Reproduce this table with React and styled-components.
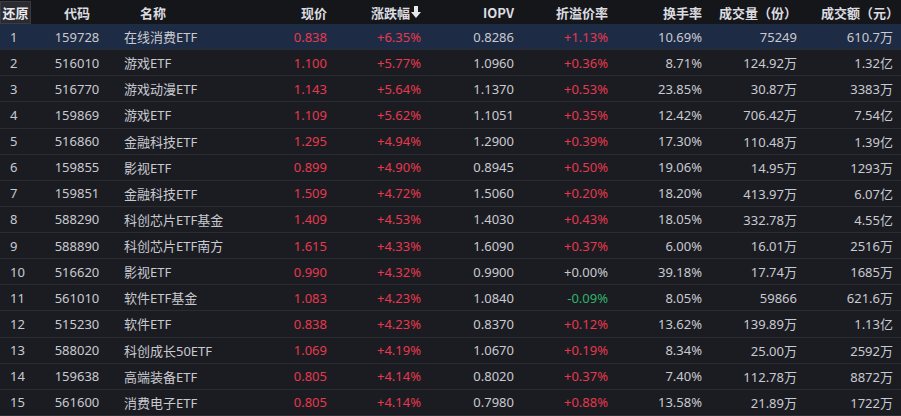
import React from "react";
import styled, { createGlobalStyle } from "styled-components";

const GlobalStyle = createGlobalStyle`
  html, body {
    margin: 0;
    padding: 0;
    background: #1b1c21;
  }
  body {
    font-family: "Noto Sans", "Noto Sans CJK SC", sans-serif;
  }
`;

const rows = [
  [1, "159728", "在线消费ETF", "0.838", "+6.35%", "0.8286", "+1.13%", "10.69%", "75249", "610.7万"],
  [2, "516010", "游戏ETF", "1.100", "+5.77%", "1.0960", "+0.36%", "8.71%", "124.92万", "1.32亿"],
  [3, "516770", "游戏动漫ETF", "1.143", "+5.64%", "1.1370", "+0.53%", "23.85%", "30.87万", "3383万"],
  [4, "159869", "游戏ETF", "1.109", "+5.62%", "1.1051", "+0.35%", "12.42%", "706.42万", "7.54亿"],
  [5, "516860", "金融科技ETF", "1.295", "+4.94%", "1.2900", "+0.39%", "17.30%", "110.48万", "1.39亿"],
  [6, "159855", "影视ETF", "0.899", "+4.90%", "0.8945", "+0.50%", "19.06%", "14.95万", "1293万"],
  [7, "159851", "金融科技ETF", "1.509", "+4.72%", "1.5060", "+0.20%", "18.20%", "413.97万", "6.07亿"],
  [8, "588290", "科创芯片ETF基金", "1.409", "+4.53%", "1.4030", "+0.43%", "18.05%", "332.78万", "4.55亿"],
  [9, "588890", "科创芯片ETF南方", "1.615", "+4.33%", "1.6090", "+0.37%", "6.00%", "16.01万", "2516万"],
  [10, "516620", "影视ETF", "0.990", "+4.32%", "0.9900", "+0.00%", "39.18%", "17.74万", "1685万"],
  [11, "561010", "软件ETF基金", "1.083", "+4.23%", "1.0840", "-0.09%", "8.05%", "59866", "621.6万"],
  [12, "515230", "软件ETF", "0.838", "+4.23%", "0.8370", "+0.12%", "13.62%", "139.89万", "1.13亿"],
  [13, "588020", "科创成长50ETF", "1.069", "+4.19%", "1.0670", "+0.19%", "8.34%", "25.00万", "2592万"],
  [14, "159638", "高端装备ETF", "0.805", "+4.14%", "0.8020", "+0.37%", "7.40%", "112.78万", "8872万"],
  [15, "561600", "消费电子ETF", "0.805", "+4.14%", "0.7980", "+0.88%", "13.58%", "21.89万", "1722万"],
];

const COLS = "32px 90px 128px 80px 94px 93px 94px 92px 97px 101px";

const Table = styled.div`
  width: 901px;
  height: 416px;
  overflow: hidden;
  background: #1b1c21;
  font-size: 13px;
`;

const HeaderRow = styled.div`
  display: grid;
  grid-template-columns: ${COLS};
  height: 24px;
  background: #15161a;
  align-items: center;
`;

const HeadCell = styled.div`
  color: #dcdce0;
  font-weight: bold;
  font-family: "Noto Sans CJK SC", sans-serif;
  padding-right: ${(p) => (p.pr !== undefined ? p.pr : 3)}px;
  padding-left: ${(p) => p.pl || 0}px;
  white-space: nowrap;
  display: flex;
  align-items: center;
  justify-content: ${(p) =>
    p.align === "left" ? "flex-start" : p.align === "center" ? "center" : "flex-end"};
`;

const ResetBox = styled.div`
  height: 23px;
  width: 31px;
  box-sizing: border-box;
  background: #2a2b31;
  border: 1px solid #3a3b42;
  color: #e8e8ec;
  font-weight: bold;
  font-family: "Noto Sans CJK SC", sans-serif;
  display: flex;
  align-items: center;
  justify-content: center;
  font-size: 13px;
`;

const Row = styled.div`
  display: grid;
  grid-template-columns: ${COLS};
  height: 26.13px;
  box-sizing: border-box;
  border-bottom: 1px solid #2b2c32;
  background: ${(p) => (p.selected ? "#1e2b44" : "#1b1c21")};
  align-items: center;
`;

const Cell = styled.div`
  color: ${(p) =>
    p.tone === "up" ? "#e6394f" : p.tone === "down" ? "#2fb36c" : "#c9cad1"};
  text-align: ${(p) => p.align || "right"};
  padding-right: ${(p) => (p.pr !== undefined ? p.pr : 3)}px;
  padding-left: ${(p) => p.pl || 0}px;
  white-space: nowrap;
  font-family: "Noto Sans", "Noto Sans CJK SC", sans-serif;
`;

const tone = (s) => (s.startsWith("+") && s !== "+0.00%" ? "up" : s.startsWith("-") ? "down" : "flat");

const DownArrow = () => (
  <svg width="10" height="12" viewBox="0 0 10 12" style={{ marginLeft: 1 }}>
    <path d="M3 0h4v6h3L5 12 0 6h3z" fill="#e8e8ec" />
  </svg>
);

export default function App() {
  return (
    <>
      <GlobalStyle />
      <Table>
        <HeaderRow>
          <HeadCell align="left" pr={0}>
            <ResetBox>还原</ResetBox>
          </HeadCell>
          <HeadCell align="center" pr={0}>代码</HeadCell>
          <HeadCell align="left" pl={18}>名称</HeadCell>
          <HeadCell>现价</HeadCell>
          <HeadCell>
            涨跌幅
            <DownArrow />
          </HeadCell>
          <HeadCell>IOPV</HeadCell>
          <HeadCell>折溢价率</HeadCell>
          <HeadCell pr={1}>换手率</HeadCell>
          <HeadCell>成交量（份）</HeadCell>
          <HeadCell pr={2}>成交额（元）</HeadCell>
        </HeaderRow>
        {rows.map((r, i) => (
          <Row key={r[0]} selected={i === 0}>
            <Cell align="left" pl={10} pr={0}>{r[0]}</Cell>
            <Cell align="center" pr={0}>{r[1]}</Cell>
            <Cell align="left" pl={2}>{r[2]}</Cell>
            <Cell tone="up">{r[3]}</Cell>
            <Cell tone={tone(r[4])}>{r[4]}</Cell>
            <Cell>{r[5]}</Cell>
            <Cell tone={tone(r[6])}>{r[6]}</Cell>
            <Cell pr={1}>{r[7]}</Cell>
            <Cell>{r[8]}</Cell>
            <Cell pr={8}>{r[9]}</Cell>
          </Row>
        ))}
      </Table>
    </>
  );
}
